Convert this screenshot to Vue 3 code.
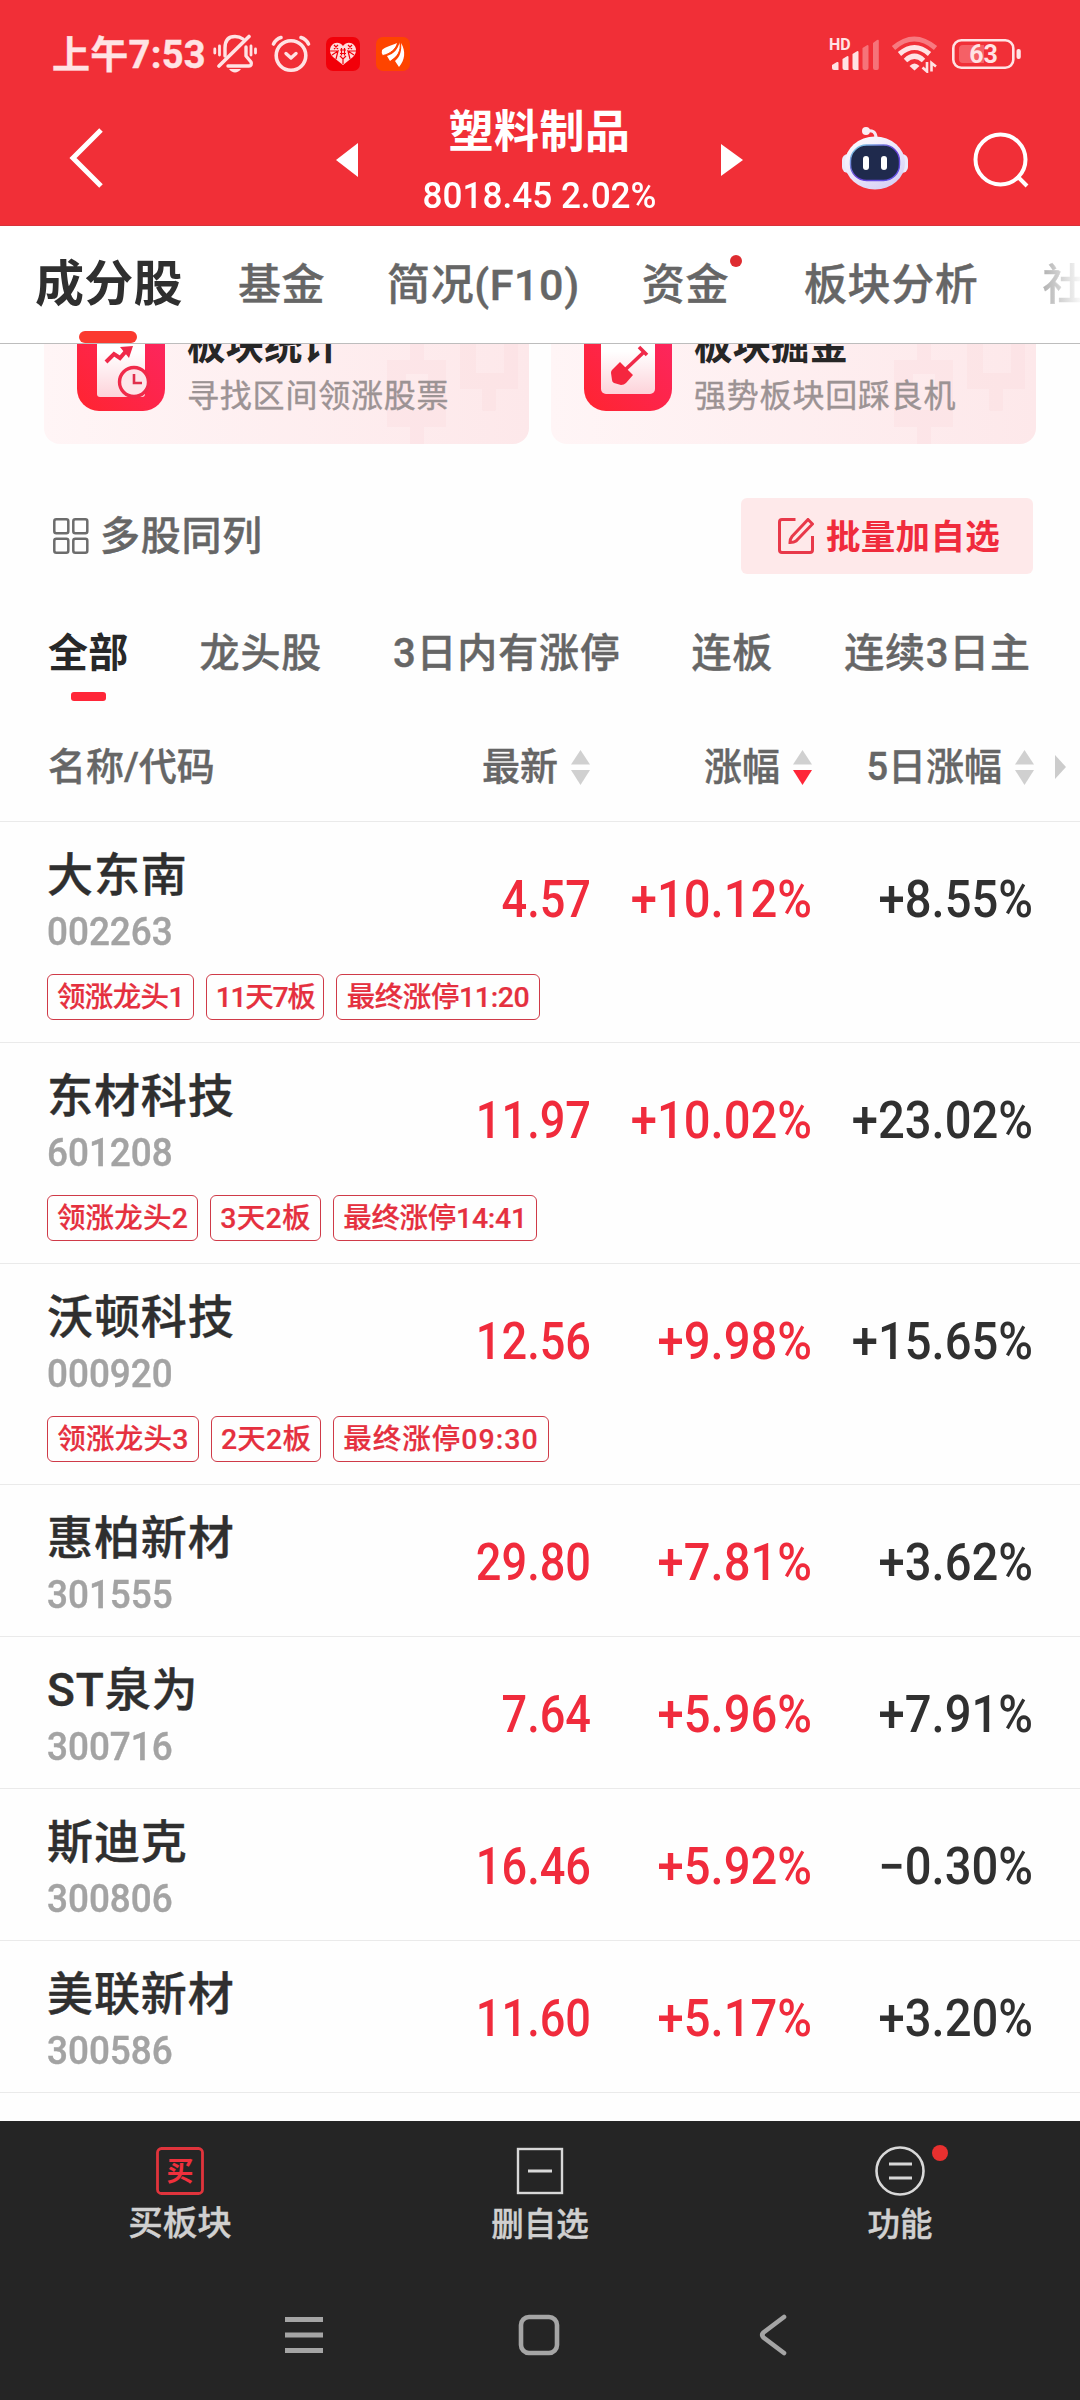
<script setup>
import { ref } from 'vue'

const activeTab = ref(0)
const tabs = [
  { text: '成分股' },
  { text: '基金' },
  { text: '简况(F10)' },
  { text: '资金', dot: true },
  { text: '板块分析' },
  { text: '社区' }
]

const activeFilter = ref(0)
const filters = ['全部', '龙头股', '3日内有涨停', '连板', '连续3日主']

const columns = [
  { text: '最新', sort: '' },
  { text: '涨幅', sort: 'desc' },
  { text: '5日涨幅', sort: '' }
]

// w: badge width, ls: letter spacing of its text
const stocks = [
  {
    name: '大东南', code: '002263', price: '4.57', pct: '+10.12%', pct5: '+8.55%',
    tags: [{ text: '领涨龙头1', w: 147, ls: -0.6 }, { text: '11天7板', w: 118, ls: -1.4 }, { text: '最终涨停11:20', w: 204, ls: -0.4 }]
  },
  {
    name: '东材科技', code: '601208', price: '11.97', pct: '+10.02%', pct5: '+23.02%',
    tags: [{ text: '领涨龙头2', w: 151, ls: 0.2 }, { text: '3天2板', w: 111, ls: 0.3 }, { text: '最终涨停14:41', w: 204, ls: -0.3 }]
  },
  {
    name: '沃顿科技', code: '000920', price: '12.56', pct: '+9.98%', pct5: '+15.65%',
    tags: [{ text: '领涨龙头3', w: 152, ls: 0.3 }, { text: '2天2板', w: 110, ls: 0.2 }, { text: '最终涨停09:30', w: 216, ls: 1 }]
  },
  { name: '惠柏新材', code: '301555', price: '29.80', pct: '+7.81%', pct5: '+3.62%' },
  { name: 'ST泉为', code: '300716', price: '7.64', pct: '+5.96%', pct5: '+7.91%' },
  { name: '斯迪克', code: '300806', price: '16.46', pct: '+5.92%', pct5: '−0.30%' },
  { name: '美联新材', code: '300586', price: '11.60', pct: '+5.17%', pct5: '+3.20%' }
]
</script>

<template>
  <div class="page">
    <header class="top">
      <div class="status">
        <span class="time">上午7:53</span>
        <svg class="bell" width="44" height="40" viewBox="0 0 44 40" fill="none" stroke="#ffe3e4" stroke-width="3.400" stroke-linecap="round">
          <path d="M12 22V14C12 6 16 2.500 22 2.500C25 2.500 28 3.500 30 5" />
          <path d="M6 32L36 2.500" stroke-width="3.600" />
          <path d="M33 13V22L38 28C39 30 38 32 36 32H15" stroke-linejoin="round" />
          <path d="M16 35H28C25 39.500 19 39.500 16 35Z" fill="#ffe3e4" stroke="none" />
          <path d="M1.800 15V19M6.500 12V21M38 12V21M42.500 15V19" stroke-width="2.800" />
        </svg>
        <svg class="alarm" width="40" height="38" viewBox="0 0 40 38" fill="none" stroke="#ffe3e4" stroke-width="3.600" stroke-linecap="round">
          <circle cx="20" cy="20.500" r="14.800" />
          <path d="M15 18.500L20 23L25 18.500" stroke-width="3.400" stroke-linejoin="round" />
          <path d="M2.500 9Q5 4 10 2.500M37.500 9Q35 4 30 2.500" />
        </svg>
        <svg class="app-icon" width="34" height="34" viewBox="0 0 34 34">
          <rect width="34" height="34" rx="7" fill="#f20009" />
          <path d="M17 9C14 5 9 5 6 8C2.500 12 4 17 7 20L17 28L27 20C30 17 31.500 12 28 8C25 5 20 5 17 9Z" fill="#ffdada" />
          <path d="M8 8L12 12M12 8L8 12M4 14H12M6 18L12 14L10 22M22 8L26 12M26 8L22 12M30 14H22M28 18L22 14L24 22M14 19L17 22L20 19M17 22V27M14 13H20M14 16.500H20M15.500 11V18.500M18.500 11V18.500" stroke="#f20009" stroke-width="1.200" fill="none" />
        </svg>
        <svg class="app-icon two" width="34" height="34" viewBox="0 0 34 34">
          <rect width="34" height="34" rx="7" fill="#fe4400" />
          <path d="M6 13C10 9.500 15 9 21 6C19 13 14 17 7 18.500Q5 16 6 13Z" fill="#fff" />
          <path d="M11 19C18 17 22 12 23.500 5.500C26 13 22 19 14 24Z" fill="#fff" />
          <path d="M19 24C24 20 26 13 25 6C30 14 29 23 23 30Z" fill="#fff" />
          <path d="M7 18.500C14 17 20 12 22.500 6M15 24C22 20 25 13 24 6" stroke="#fe4400" stroke-width="1" fill="none" />
        </svg>
        <div class="grow"></div>
        <svg class="signal" width="52" height="38" viewBox="0 0 52 38">
          <text x="0" y="14.500" class="hd">HD</text>
          <g fill="#ffe3e4" transform="translate(0 1)">
            <path d="M3 29L8 26Q9.500 25.500 9.500 27V34H5Q3 34 3 32Z" />
            <path d="M13.500 23L18 20.200Q19.500 19.500 19.500 21.500V34H15.500Q13.500 34 13.500 32Z" />
            <path d="M23.500 18L28 15.200Q29.500 14.500 29.500 16.500V34H25.500Q23.500 34 23.500 32Z" />
            <path opacity=".38" d="M33.500 12L38 9.200Q39.500 8.500 39.500 10.500V32Q39.500 34 37.500 34H35.500Q33.500 34 33.500 32Z" />
            <path opacity=".38" d="M44 7L48 4Q49.800 3 49.800 5V32Q49.800 34 48 34H46Q44 34 44 32Z" />
          </g>
        </svg>
        <svg class="wifi" width="48" height="38" viewBox="0 0 48 38" fill="none" stroke="#ffe3e4" stroke-width="5">
          <path opacity=".42" d="M2.500 13Q23 -5 44.500 13" />
          <path d="M8.500 19Q23.500 6 38.500 19" />
          <path d="M14.500 25.500Q23.500 17 32.500 25.500" />
          <path d="M18.500 31Q23.500 26 28.500 31L23.500 35.500Z" fill="#ffe3e4" stroke="none" />
          <path d="M36 27V36.500L31.500 32.500M40.500 36.500V28L45 31.500" stroke-width="2.600" />
        </svg>
        <svg class="battery" width="70" height="30" viewBox="0 0 70 30">
          <rect x="1.300" y="1.300" width="60" height="27.400" rx="8" fill="none" stroke="#ffe3e4" stroke-width="2.600" />
          <path d="M11 6H32V24H11Q7 24 7 20V10Q7 6 11 6Z" fill="#ffe3e4" opacity=".28" />
          <rect x="64.500" y="10" width="4.300" height="10" rx="2" fill="#ffe3e4" />
          <text x="31.500" y="24" text-anchor="middle" class="level">63</text>
        </svg>
      </div>
      <div class="nav">
        <svg class="back" width="36" height="60" viewBox="0 0 36 60">
          <path d="M32 2L4 30L32 58" fill="none" stroke="#fff" stroke-width="5" />
        </svg>
        <svg class="prev" width="22" height="36" viewBox="0 0 22 36"><path d="M22 1V35L0 18Z" fill="#fff" /></svg>
        <div class="title">
          <div class="title-name">塑料制品</div>
          <div class="title-quote">8018.45 2.02%</div>
        </div>
        <svg class="next" width="22" height="36" viewBox="0 0 22 36"><path d="M0 2V34L22 18Z" fill="#fff" /></svg>
        <svg class="robot" width="68" height="64" viewBox="0 0 68 64">
          <defs>
            <linearGradient id="shell" x1="0" y1="0" x2=".7" y2="1">
              <stop offset="0" stop-color="#fff" />
              <stop offset=".55" stop-color="#ece6fb" />
              <stop offset="1" stop-color="#d6d0f4" />
            </linearGradient>
            <linearGradient id="rim" x1="0" y1="0" x2="1" y2="1">
              <stop offset="0" stop-color="#7fe0e6" />
              <stop offset=".5" stop-color="#6b3fd6" />
              <stop offset="1" stop-color="#5d55e8" />
            </linearGradient>
          </defs>
          <path d="M25 5Q35 3 35 12" fill="none" stroke="#f6e9f4" stroke-width="3" />
          <circle cx="25" cy="5" r="4" fill="#fbeef4" />
          <rect x="1" y="28" width="66" height="19" rx="6" fill="#ece9fb" />
          <ellipse cx="34" cy="37" rx="30" ry="26.500" fill="url(#shell)" />
          <rect x="9.500" y="19" width="49" height="35.500" rx="16" fill="#1f2a4d" stroke="url(#rim)" stroke-width="1.400" />
          <rect x="22" y="30" width="6" height="14" rx="3" fill="#fff" />
          <rect x="40" y="30" width="6" height="14" rx="3" fill="#fff" />
        </svg>
        <svg class="search" width="58" height="58" viewBox="0 0 58 58" fill="none" stroke="#fff" stroke-width="4">
          <circle cx="29.500" cy="28.500" r="25" />
          <path d="M46 45L56 55" />
        </svg>
      </div>
    </header>

    <nav class="tabs">
      <div v-for="(t, i) in tabs" :key="t.text" class="tab" :class="{ active: i === activeTab, dotted: t.dot, faded: i === tabs.length - 1 }" @click="activeTab = i">
        {{ t.text }}
        <i v-if="t.dot" class="tab-dot"></i>
      </div>
    </nav>

    <main class="content">
      <section class="cards">
        <div class="card">
          <svg class="candles" width="160" height="154" viewBox="0 0 160 154">
            <path d="M40 40H54V70H76V137H54V154H40V137H17V70H40ZM36 84V120H58V84Z" fill-rule="evenodd" />
            <path d="M90 20H148V99H126V119Q126 121 124 121H114Q112 121 112 119V99H90ZM106 40V83H134V40Z" fill-rule="evenodd" />
          </svg>
          <svg class="card-icon" width="88" height="88" viewBox="0 0 88 88">
            <defs>
              <linearGradient id="iconRed" x1="0" y1="1" x2="1" y2="0">
                <stop offset="0" stop-color="#ff2430" />
                <stop offset="1" stop-color="#fc2663" />
              </linearGradient>
              <linearGradient id="paper" x1="0" y1="0" x2="0" y2="1">
                <stop offset=".3" stop-color="#fff" />
                <stop offset="1" stop-color="#fdd3da" />
              </linearGradient>
            </defs>
            <rect width="88" height="88" rx="22" fill="url(#iconRed)" />
            <rect x="20" y="10" width="48" height="64" rx="3" fill="url(#paper)" />
            <path d="M29 39L37 31L43 35L50 27" fill="none" stroke="#f02a4a" stroke-width="4" />
            <path d="M43 24L56 23L52 35Z" fill="#f02a4a" />
            <circle cx="57" cy="59" r="14.500" fill="#fde6ea" stroke="#f02a4a" stroke-width="3.400" />
            <path d="M57 51V60H65" fill="none" stroke="#e02f4c" stroke-width="2.600" />
          </svg>
          <div class="card-text">
            <div class="card-title">板块统计</div>
            <div class="card-sub">寻找区间领涨股票</div>
          </div>
        </div>
        <div class="card">
          <svg class="candles" width="160" height="154" viewBox="0 0 160 154">
            <path d="M40 40H54V70H76V137H54V154H40V137H17V70H40ZM36 84V120H58V84Z" fill-rule="evenodd" />
            <path d="M90 20H148V99H126V119Q126 121 124 121H114Q112 121 112 119V99H90ZM106 40V83H134V40Z" fill-rule="evenodd" />
          </svg>
          <svg class="card-icon" width="88" height="88" viewBox="0 0 88 88">
            <rect width="88" height="88" rx="22" fill="url(#iconRed)" />
            <rect x="17" y="10" width="54" height="61" rx="5" fill="url(#paper)" />
            <path d="M42 46L60 29M55 24L63 32" fill="none" stroke="#f02a4a" stroke-width="3.600" />
            <path d="M36 39L49 52L42 60Q40 62 37 62L30 60Q28 59 28 57L27 50Q27 48 28 47Z" fill="#f5263f" />
          </svg>
          <div class="card-text">
            <div class="card-title">板块掘金</div>
            <div class="card-sub">强势板块回踩良机</div>
          </div>
        </div>
      </section>

      <section class="tools">
        <svg width="36" height="36" viewBox="0 0 36 36" fill="none" stroke="#6c6c6c" stroke-width="2.500">
          <rect x="1.300" y="1.300" width="14" height="14" rx="2" />
          <rect x="20.300" y="1.300" width="14" height="14" rx="2" />
          <rect x="1.300" y="20.700" width="14" height="14" rx="2" />
          <rect x="20.300" y="20.700" width="14" height="14" rx="2" />
        </svg>
        <span class="multi">多股同列</span>
        <button class="batch">
          <svg width="36" height="36" viewBox="0 0 36 36" fill="none" stroke="#e8394a" stroke-width="3">
            <path d="M17.500 1.500H4Q1.500 1.500 1.500 4V32Q1.500 34.500 4 34.500H32Q34.500 34.500 34.500 32V18" />
            <path d="M30 1.500L34.500 6L18 23Q16 24.500 12 24.500Q12 21 14 18.500Z" />
          </svg>
          <span>批量加自选</span>
        </button>
      </section>

      <section class="filters">
        <div v-for="(f, i) in filters" :key="f" class="filter" :class="{ active: i === activeFilter }" @click="activeFilter = i">{{ f }}</div>
      </section>

      <section class="thead">
        <span class="th-text">名称/代码</span>
        <span v-for="c in columns" :key="c.text" class="th">
          <span class="th-text">{{ c.text }}</span>
          <svg width="19" height="35" viewBox="0 0 19 35">
            <path d="M9.500 0L19 14.500H0Z" fill="#d0d0d0" />
            <path d="M9.500 35L19 20H0Z" :fill="c.sort === 'desc' ? '#ff2638' : '#d0d0d0'" />
          </svg>
        </span>
        <svg class="more" width="11" height="24" viewBox="0 0 11 24"><path d="M0 0L11 12L0 24Z" fill="#ccc" /></svg>
      </section>

      <section v-for="s in stocks" :key="s.code" class="row">
        <div class="row-main">
          <div class="who">
            <div class="name">{{ s.name }}</div>
            <div class="code">{{ s.code }}</div>
          </div>
          <div class="num price up">{{ s.price }}</div>
          <div class="num up">{{ s.pct }}</div>
          <div class="num">{{ s.pct5 }}</div>
        </div>
        <div v-if="s.tags" class="tags">
          <span v-for="t in s.tags" :key="t.text" class="tag" :style="{ width: t.w + 'px', letterSpacing: t.ls + 'px' }">{{ t.text }}</span>
        </div>
      </section>
    </main>

    <footer class="bottom">
      <div class="actions">
        <div class="action first">
          <svg width="48" height="50" viewBox="0 0 48 50">
            <rect x="1.500" y="2.500" width="45" height="45" rx="4" fill="none" stroke="#e0343c" stroke-width="2.800" />
            <text x="24" y="35" text-anchor="middle" class="buy">买</text>
          </svg>
          <span>买板块</span>
        </div>
        <div class="action">
          <svg width="48" height="50" viewBox="0 0 48 50" fill="none" stroke="#d8d8d8">
            <rect x="2" y="3" width="44" height="44" stroke-width="2.400" />
            <path d="M12 25H36" stroke-width="3" />
          </svg>
          <span>删自选</span>
        </div>
        <div class="action">
          <svg width="50" height="50" viewBox="0 0 50 50" fill="none" stroke="#d8d8d8">
            <circle cx="25" cy="25" r="23.500" stroke-width="2.600" />
            <path d="M14 18H37M14 32H37" stroke-width="2.800" />
          </svg>
          <span>功能</span>
          <i class="action-dot"></i>
        </div>
      </div>
      <div class="system">
        <svg width="40" height="42" viewBox="0 0 40 42" stroke="#a5a5a5" stroke-width="5"><path d="M1 5.500H39M1 21H39M1 36.500H39" /></svg>
        <svg width="42" height="42" viewBox="0 0 42 42" fill="none" stroke="#a5a5a5" stroke-width="4.600"><rect x="3" y="3" width="36" height="36" rx="8" /></svg>
        <svg width="28" height="42" viewBox="0 0 28 42" fill="none" stroke="#a5a5a5" stroke-width="4.600" stroke-linecap="round"><path d="M25 3L4.500 18.500Q2 21 4.500 23.500L25 39" /></svg>
      </div>
    </footer>
  </div>
</template>

<style>
body { margin: 0; background: #fff }
</style>

<style scoped>
.page {
  width: 1080px;
  height: 2400px;
  display: flex;
  flex-direction: column;
  overflow: hidden;
  background: #fefefe;
  color: #2f2f2f;
  font-family: Roboto, "Noto Sans CJK SC", sans-serif;
  font-weight: 500;
  -webkit-text-stroke: .4px;
}
svg { display: block; flex: none }

.top { height: 226px; flex: none; background: #f12f37; box-sizing: border-box; border-bottom: 1px solid #d8323a }
.status { display: flex; align-items: center; height: 108px; padding: 0 58px 0 52px }
.time { width: 161px; font-size: 38px; font-weight: 700; color: #ffe3e4; white-space: nowrap; line-height: 50px; padding-top: 2px; letter-spacing: .3px }
.alarm { margin-left: 14px }
.app-icon { margin-left: 15px }
.app-icon.two { margin-left: 16px }
.grow { flex: 1 }
.hd { font-size: 16px; font-weight: 700; fill: #ffe3e4 }
.wifi { margin-left: 10px }
.battery { margin-left: 13px }
.level { font-size: 25px; font-weight: 700; fill: #ffe3e4 }
.nav { display: flex; align-items: center; height: 100px; padding: 0 50px 0 69px; color: #fff }
.prev { margin-left: 231px; margin-top: 4px }
.next { margin-top: 3px }
.title { width: 363px; text-align: center }
.title-name { font-size: 45px; font-weight: 700; line-height: 56px; margin-top: 6px; letter-spacing: .5px; -webkit-text-stroke: 0 }
.title-quote { font-size: 37px; line-height: 44px; margin-top: 13px; transform: scaleX(.95); -webkit-text-stroke: 0 }
.robot { margin-left: 98px }
.search { margin-left: 62px; margin-top: 3px }

.tabs { display: flex; align-items: center; height: 118px; flex: none; box-sizing: border-box; padding-left: 35px; border-bottom: 1px solid #bdbdbd; background: #fff; gap: 62px; overflow: hidden }
.tab { position: relative; height: 117px; line-height: 118px; font-size: 43px; color: #666; white-space: nowrap; flex: none; letter-spacing: .6px }
.tab.active { font-size: 49px; font-weight: 700; color: #2f2f2f; letter-spacing: .3px; margin-right: -7px; -webkit-text-stroke: 0 }
.tab.active::after { content: ""; position: absolute; left: 44px; bottom: 0; width: 58px; height: 12px; border-radius: 6px; background: #fb3a2f }
.tab.dotted { margin-right: 13px }
.tab.faded { background: linear-gradient(90deg, #b0b0b0, #fff 42px); background-clip: text; -webkit-background-clip: text; color: transparent; margin-left: 2px }
.tab-dot { position: absolute; right: -13px; top: 29px; width: 12px; height: 12px; border-radius: 50%; background: #de2c30 }

.content { flex: 1; overflow: hidden }
.cards { display: flex; gap: 22px; margin: -54px 0 0 44px }
.card { position: relative; display: flex; align-items: center; width: 485px; height: 154px; box-sizing: border-box; padding-left: 33px; border-radius: 16px; background: linear-gradient(90deg, #fff5f6, #fde8ea); overflow: hidden }
.candles { position: absolute; right: -1px; top: 0; fill: #fbd9dc; opacity: .32 }
.card-text { margin-left: 22px; position: relative }
.card-title { font-size: 38.500px; font-weight: 700; line-height: 46px; color: #262626; margin-top: 5px; -webkit-text-stroke: 0 }
.card-sub { font-size: 32px; letter-spacing: .8px; line-height: 40px; margin-top: 7px; color: #9c9394; font-weight: 400; white-space: nowrap }

.tools { display: flex; align-items: center; height: 76px; margin: 54px 47px 0 53px }
.multi { margin: -6px 0 0 11px; font-size: 40px; letter-spacing: .7px; color: #666 }
.batch { display: flex; align-items: center; width: 292px; height: 76px; margin-left: auto; padding: 0 0 0 37px; border: 0; border-radius: 6px; background: #fee9ea; color: #f02b3c; font: inherit; font-weight: 700; font-size: 34.500px; gap: 12px; white-space: nowrap; -webkit-text-stroke: 0 }
.batch span { margin-top: -5px; letter-spacing: .3px }

.filters { display: flex; gap: 71px; padding-left: 48px; margin-top: 41px; height: 86px }
.filter { position: relative; font-size: 40px; line-height: 78px; letter-spacing: .8px; color: #666; white-space: nowrap }
.filter.active { font-weight: 700; color: #282828; letter-spacing: .3px; -webkit-text-stroke: 0 }
.filter.active::after { content: ""; position: absolute; left: 23px; bottom: 0; width: 35px; height: 9px; border-radius: 3px; background: #ff2638 }

.thead { display: grid; grid-template-columns: 324px 218px 222px 222px 34px; align-items: center; height: 121px; box-sizing: border-box; padding: 12px 0 0 48px; border-bottom: 1px solid #eaeaea; font-size: 38px; color: #666 }
.th-text { margin-top: -7px }
.th { display: flex; align-items: center; justify-content: flex-end; gap: 13px; white-space: nowrap }
.more { margin-left: 21px }

.row { border-bottom: 1px solid #eaeaea; padding: 0 46px 0 47px }
.row-main { display: grid; grid-template-columns: 324px 220px 221px 221px; height: 151px; align-items: center }
.who { align-self: start; padding-top: 23px }
.name { font-size: 46px; letter-spacing: .9px; line-height: 60px; color: #2f2f2f }
.code { font-size: 39px; line-height: 44px; margin-top: 5px; color: #a3a3a3; transform: scaleX(.945); transform-origin: left }
.num { font-size: 51px; padding-top: 3px; text-align: right; transform: scaleX(.925); transform-origin: right; white-space: nowrap; color: #303030; -webkit-text-stroke: 0 }
.num.price { transform: scaleX(.885) }
.num.up { color: #f02b3c }
.tags { display: flex; gap: 12px; margin-top: 1px; padding-bottom: 22px }
.tag { box-sizing: border-box; height: 46px; line-height: 45px; text-align: center; border: 1px solid #cf3a48; border-radius: 6px; font-size: 28.500px; color: #e5303f; white-space: nowrap; -webkit-text-stroke: .2px }

.bottom { height: 279px; flex: none; background: #252525; color: #d0d0d0 }
.actions { display: grid; grid-template-columns: repeat(3, 1fr) }
.action { position: relative; display: flex; flex-direction: column; align-items: center; padding-top: 25px; font-size: 32.500px; line-height: 44px }
.action span { margin-top: 7px }
.action.first span { font-size: 34.500px; margin-top: 5px }
.action-dot { position: absolute; left: 212px; top: 24px; width: 16px; height: 16px; border-radius: 50%; background: #e8302f }
.buy { font-size: 27px; font-weight: 700; fill: #f0303c }
.system { display: flex; align-items: center; padding-left: 284px; margin-top: 67px; gap: 194px }
.system svg:last-child { margin-left: 5px }
</style>
